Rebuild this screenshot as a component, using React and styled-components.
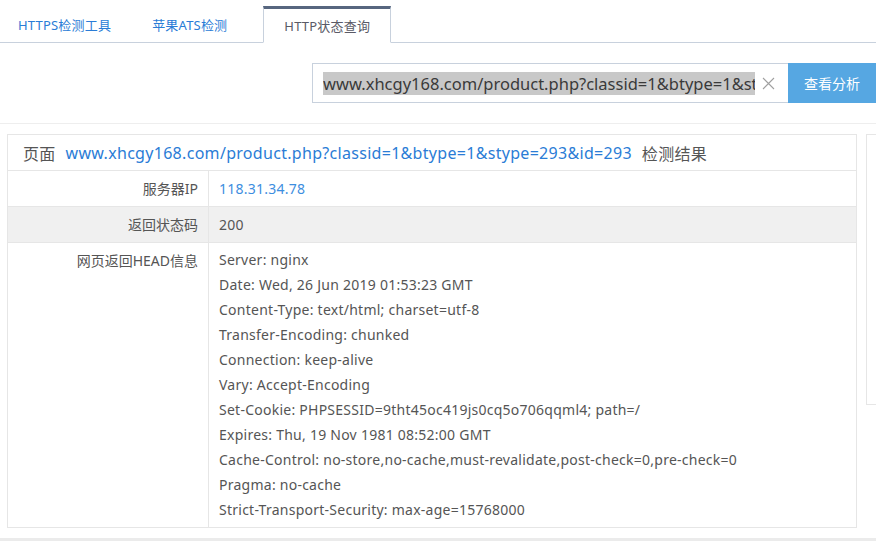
import React from 'react';
import styled, { createGlobalStyle } from 'styled-components';

const GlobalStyle = createGlobalStyle`
  html, body {
    margin: 0;
    padding: 0;
    background: #fff;
    overflow: hidden;
  }
  body {
    font-family: "Noto Sans", "Noto Sans CJK SC", sans-serif;
    color: #555;
  }
`;

const Page = styled.div`
  width: 876px;
  min-height: 541px;
  background: #fff;
`;

const TabBar = styled.div`
  display: flex;
  align-items: flex-end;
  height: 42px;
  border-bottom: 1px solid #c8d1dd;
`;

const Tab = styled.div`
  height: ${p => (p.$active ? '33px' : '35px')};
  padding: 0 20px;
  margin-left: ${p => p.$offset || '0'};
  margin-bottom: ${p => (p.$active ? '-1px' : '0')};
  display: flex;
  align-items: center;
  font-size: 13px;
  letter-spacing: 0.2px;
  color: ${p => (p.$active ? '#5a5a66' : '#2a7cd6')};
  background: #fff;
  border: ${p => (p.$active ? '1px solid #c8d1dd' : 'none')};
  border-top: ${p => (p.$active ? '3px solid #57667f' : 'none')};
  border-bottom: ${p => (p.$active ? '1px solid #fff' : 'none')};
  cursor: pointer;
`;

const SearchBar = styled.div`
  display: flex;
  justify-content: flex-end;
  padding: 20px 0;
  border-bottom: 1px solid #eeeeee;
`;

const Field = styled.div`
  width: 465px;
  height: 38px;
  border: 1px solid #c8d1dd;
  border-right: none;
  display: flex;
  align-items: center;
  padding-left: 10px;
`;

const Selected = styled.span`
  width: 432px;
  overflow: hidden;
  white-space: nowrap;
  font-size: 16.5px;
  line-height: 23px;
  color: #3a3a3a;
  background: #c8c8c8;
`;

const Clear = styled.span`
  display: flex;
  margin-left: 7px;
  color: #a0a0a0;
`;

const Button = styled.button`
  width: 88px;
  height: 40px;
  border: none;
  background: #56a7e2;
  color: #fff;
  font-family: inherit;
  font-size: 14px;
  cursor: pointer;
`;

const Main = styled.div`
  display: flex;
  align-items: flex-start;
  gap: 9px;
  padding: 10px 0 10px 7px;
`;

const Card = styled.div`
  flex-shrink: 0;
  width: 848px;
  border: 1px solid #e6e6e6;
`;

const CardTitle = styled.div`
  height: 35px;
  display: flex;
  align-items: center;
  gap: 10px;
  padding-left: 15px;
  font-size: 16px;
  letter-spacing: 0.3px;
  color: #555;
  border-bottom: 1px solid #e6e6e6;
`;

const Link = styled.span`
  color: #2a7cd6;
`;

const Row = styled.div`
  display: flex;
  background: ${p => (p.$shade ? '#f0f0f0' : '#fff')};
  border-top: ${p => (p.$first ? 'none' : '1px solid #e6e6e6')};
  font-size: 14px;
`;

const Label = styled.div`
  width: 190px;
  padding: ${p => (p.$tall ? '5px' : '0')} 10px 0 0;
  min-height: 35px;
  line-height: ${p => (p.$tall ? '25px' : '35px')};
  text-align: right;
  border-right: 1px solid #e6e6e6;
  color: #555;
`;

const Value = styled.div`
  flex: 1;
  padding: ${p => (p.$tall ? '4px 10px 5px' : '0 10px')};
  line-height: ${p => (p.$tall ? '25px' : '35px')};
  letter-spacing: 0.25px;
  color: ${p => (p.$link ? '#3d8ee0' : '#555')};
`;

const Line = styled.div`
  white-space: nowrap;
`;

const SidePanel = styled.div`
  flex-shrink: 0;
  width: 200px;
  height: 269px;
  border: 1px solid #e6e6e6;
`;

const Footer = styled.div`
  height: 20px;
  background: #ebebeb;
`;

const headers = [
  'Server: nginx',
  'Date: Wed, 26 Jun 2019 01:53:23 GMT',
  'Content-Type: text/html; charset=utf-8',
  'Transfer-Encoding: chunked',
  'Connection: keep-alive',
  'Vary: Accept-Encoding',
  'Set-Cookie: PHPSESSID=9tht45oc419js0cq5o706qqml4; path=/',
  'Expires: Thu, 19 Nov 1981 08:52:00 GMT',
  'Cache-Control: no-store,no-cache,must-revalidate,post-check=0,pre-check=0',
  'Pragma: no-cache',
  'Strict-Transport-Security: max-age=15768000',
];

const url = 'www.xhcgy168.com/product.php?classid=1&btype=1&stype=293&id=293';

export default function App() {
  return (
    <Page>
      <GlobalStyle />
      <TabBar>
        <Tab $offset="-2px">HTTPS检测工具</Tab>
        <Tab $offset="1px">苹果ATS检测</Tab>
        <Tab $active $offset="16px">HTTP状态查询</Tab>
      </TabBar>

      <SearchBar>
        <Field>
          <Selected>{url}</Selected>
          <Clear>
            <svg width="13" height="13" viewBox="0 0 13 13">
              <path d="M1 1L12 12M12 1L1 12" stroke="currentColor" strokeWidth="1.1" fill="none" />
            </svg>
          </Clear>
        </Field>
        <Button>查看分析</Button>
      </SearchBar>

      <Main>
        <Card>
          <CardTitle>
            <span>页面</span>
            <Link>{url}</Link>
            <span>检测结果</span>
          </CardTitle>
          <Row $first>
            <Label>服务器IP</Label>
            <Value $link>118.31.34.78</Value>
          </Row>
          <Row $shade>
            <Label>返回状态码</Label>
            <Value>200</Value>
          </Row>
          <Row>
            <Label $tall>网页返回HEAD信息</Label>
            <Value $tall>
              {headers.map((h, i) => (
                <Line key={i}>{h}</Line>
              ))}
            </Value>
          </Row>
        </Card>
        <SidePanel />
      </Main>
      <Footer />
    </Page>
  );
}
